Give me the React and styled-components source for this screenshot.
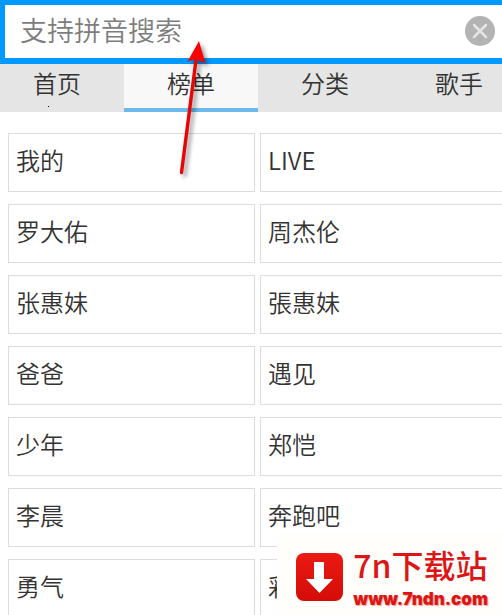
import { useState } from "react";
import styled, { createGlobalStyle } from "styled-components";

const tabs = ["首页", "榜单", "分类", "歌手"];

const keywords = [
  "我的",
  "LIVE",
  "罗大佑",
  "周杰伦",
  "张惠妹",
  "張惠妹",
  "爸爸",
  "遇见",
  "少年",
  "郑恺",
  "李晨",
  "奔跑吧",
  "勇气",
  "彩虹",
];

const App = () => {
  const [query, setQuery] = useState("");
  const [active, setActive] = useState("榜单");

  return (
    <Page>
      <GlobalStyle />
      <SearchBar>
        <SearchInput
          type="text"
          aria-label="支持拼音搜索"
          placeholder="支持拼音搜索"
          value={query}
          onChange={(e) => setQuery(e.target.value)}
        />
        <ClearButton type="button" aria-label="清除" onClick={() => setQuery("")}>
          <svg width="30" height="30" viewBox="0 0 30 30">
            <circle cx="15" cy="15" r="15" fill="#b3b3b3" />
            <path
              d="M9 9L21 21M21 9L9 21"
              stroke="#e4e4e4"
              strokeWidth="2.6"
              strokeLinecap="round"
            />
          </svg>
        </ClearButton>
      </SearchBar>

      <TabBar>
        {tabs.map((tab) => (
          <Tab
            key={tab}
            type="button"
            $active={tab === active}
            onClick={() => setActive(tab)}
          >
            {tab}
          </Tab>
        ))}
      </TabBar>

      <KeywordGrid>
        {keywords.map((word) => (
          <Keyword key={word} type="button" onClick={() => setQuery(word)}>
            {word}
          </Keyword>
        ))}
      </KeywordGrid>

      <Dot />
      <Arrow width="50" height="150" viewBox="0 0 50 150" aria-hidden="true">
        <path
          d="M21.500 132.500L36 20"
          stroke="#ea0404"
          strokeWidth="3.4"
          strokeLinecap="round"
        />
        <path d="M39 1L27.500 21.500L36 19L45.500 23.500Z" fill="#ff0000" />
      </Arrow>

      <SiteBadge>
        <svg width="47" height="48" viewBox="0 0 47 48" aria-hidden="true">
          <defs>
            <linearGradient id="badge" x1="0" y1="0" x2="0" y2="1">
              <stop offset="0" stopColor="#ea1a12" />
              <stop offset="1" stopColor="#d40c08" />
            </linearGradient>
          </defs>
          <rect width="47" height="48" rx="8" fill="url(#badge)" />
          <path d="M18 9H28V26H37L23.500 40L10 26H18Z" fill="#fff" />
        </svg>
        <BadgeText>
          <BadgeName>7n下载站</BadgeName>
          <BadgeUrl>www.7ndn.com</BadgeUrl>
        </BadgeText>
      </SiteBadge>
    </Page>
  );
};

export default App;

const GlobalStyle = createGlobalStyle`
  * {
    box-sizing: border-box;
  }
  body {
    margin: 0;
    background: #fff;
    font-family: "Noto Sans CJK SC", "Noto Sans", sans-serif;
  }
  button,
  input {
    font-family: inherit;
    font-weight: 350;
  }
`;

const Page = styled.div`
  position: relative;
  height: 100vh;
  overflow: hidden;
  background: #fff;
`;

const SearchBar = styled.div`
  display: flex;
  align-items: center;
  height: 64px;
  padding: 0 7px 1px 0;
  border: solid #0099ff;
  border-width: 5px 0 6px 5px;
`;

const SearchInput = styled.input`
  flex: 1;
  min-width: 0;
  height: 100%;
  padding: 0 15px 4px;
  border: none;
  outline: none;
  background: transparent;
  color: #333;
  font-size: 27px;
  &::placeholder {
    color: #7d7d7d;
    opacity: 1;
  }
`;

const ClearButton = styled.button`
  display: flex;
  padding: 0;
  border: none;
  background: none;
  cursor: pointer;
`;

/* the strip is scrolled a little, both end tabs run past the screen */
const TabBar = styled.nav`
  display: flex;
  height: 48px;
  margin: 0 -24px 0 -10px;
  background: #e5e5e5;
`;

const Tab = styled.button`
  flex: 1;
  padding: 0 0 6px;
  border: none;
  border-bottom: ${({ $active }) => ($active ? "4px solid #6cb8ea" : "4px solid transparent")};
  background: ${({ $active }) => ($active ? "#f8f8f8" : "transparent")};
  color: #333;
  font-size: 24px;
  line-height: 36px;
  cursor: pointer;
`;

const KeywordGrid = styled.div`
  display: grid;
  grid-template-columns: 1fr 1fr;
  gap: 12px 5px;
  margin: 21px -5px 0 8px;
`;

const Keyword = styled.button`
  height: 59px;
  padding: 0 7px 6px;
  border: 1px solid #dcdcdc;
  background: #fff;
  color: #333;
  font-size: 24px;
  text-align: left;
  cursor: pointer;
`;

const Dot = styled.span`
  position: absolute;
  top: 106px;
  left: 48px;
  width: 1px;
  height: 1px;
  background: #000;
`;

const Arrow = styled.svg`
  position: absolute;
  top: 40px;
  left: 160px;
  pointer-events: none;
  filter: drop-shadow(3px 3px 2px rgba(0, 0, 0, 0.4));
`;

const SiteBadge = styled.div`
  position: absolute;
  right: 0;
  bottom: 0;
  display: flex;
  align-items: center;
  gap: 10px;
  padding: 11px 14px 5px 19px;
  background: #fffefa;
`;

const BadgeText = styled.div`
  display: flex;
  flex-direction: column;
  gap: 4px;
`;

const BadgeName = styled.span`
  color: #dc1616;
  font-size: 32px;
  font-weight: 500;
  line-height: 40px;
`;

const BadgeUrl = styled.span`
  color: #dc1616;
  font-family: Inter, "Liberation Sans", sans-serif;
  font-size: 17px;
  font-weight: 900;
  line-height: 22px;
  text-shadow: 1px 1px 1px rgba(224, 26, 26, 0.4);
`;
